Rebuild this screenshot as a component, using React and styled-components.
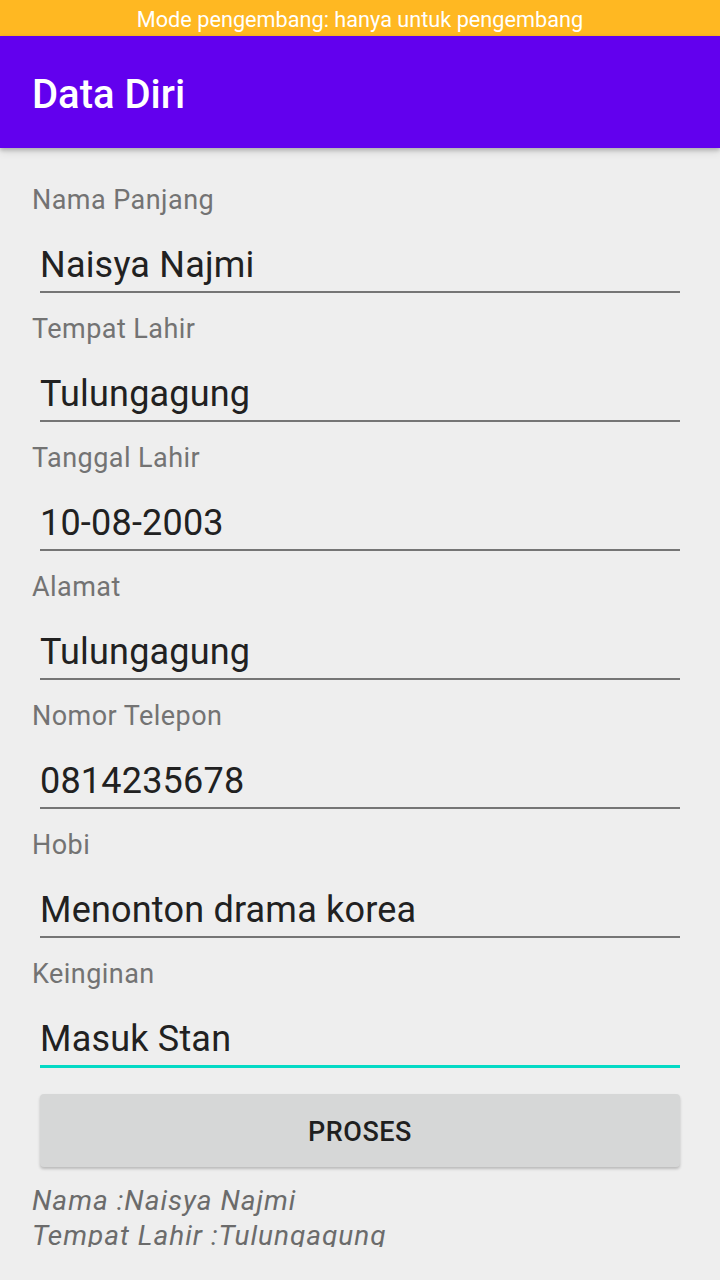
import React from 'react'
import styled, { createGlobalStyle } from 'styled-components'

const GlobalStyle = createGlobalStyle`
  html, body {
    margin: 0;
    padding: 0;
    background: #eeeeee;
  }
  * {
    box-sizing: border-box;
  }
`

const Screen = styled.div`
  width: 720px;
  height: 1280px;
  overflow: hidden;
  background: #eeeeee;
  font-family: Roboto, "Noto Sans", sans-serif;
  display: flex;
  flex-direction: column;
`

const DevBanner = styled.div`
  height: 36px;
  background: #ffb822;
  color: #ffffff;
  font-size: 21.7px;
  line-height: 39px;
  text-align: center;
`

const AppBar = styled.header`
  position: relative;
  z-index: 1;
  height: 112px;
  background: #6200ee;
  display: flex;
  align-items: center;
  padding: 5px 32px 0;
  box-shadow: 0 2px 4px rgba(0, 0, 0, 0.22), 0 4px 8px rgba(0, 0, 0, 0.1);
`

const Title = styled.h1`
  margin: 0;
  color: #ffffff;
  font-size: 40px;
  font-weight: 500;
  line-height: 40px;
`

const Form = styled.main`
  display: flex;
  flex-direction: column;
  padding: 36px 32px 0;
`

const Field = styled.div`
  display: flex;
  flex-direction: column;
  margin-bottom: 20px;
`

const Label = styled.label`
  font-size: 27px;
  letter-spacing: 0.45px;
  line-height: 32px;
  color: #737373;
`

const Input = styled.div`
  margin: 0 8px;
  padding: 27px 0 4px;
  font-size: 36px;
  letter-spacing: 0.2px;
  line-height: 44px;
  color: #212121;
  border-bottom: ${p => (p.$focused ? '3px solid #03dac5' : '2px solid #757575')};
`

const Button = styled.button`
  margin: 6px 8px 0;
  height: 73px;
  padding: 3px 0 0;
  border: none;
  border-radius: 4px;
  background: #d6d7d7;
  color: #1f1f1f;
  font-family: Roboto, "Noto Sans", sans-serif;
  font-size: 27px;
  font-weight: 500;
  letter-spacing: 0.5px;
  box-shadow: 0 2px 3px rgba(0, 0, 0, 0.22);
`

const Result = styled.div`
  margin-top: 16px;
  height: 64px;
  overflow: hidden;
  font-size: 28px;
  font-style: italic;
  letter-spacing: 1px;
  line-height: 35px;
  color: #6b6b6b;
`

const fields = [
  { label: 'Nama Panjang', value: 'Naisya Najmi' },
  { label: 'Tempat Lahir', value: 'Tulungagung' },
  { label: 'Tanggal Lahir', value: '10-08-2003' },
  { label: 'Alamat', value: 'Tulungagung' },
  { label: 'Nomor Telepon', value: '0814235678' },
  { label: 'Hobi', value: 'Menonton drama korea' },
  { label: 'Keinginan', value: 'Masuk Stan', focused: true },
]

export default function App() {
  return (
    <>
      <GlobalStyle />
      <Screen>
        <DevBanner>Mode pengembang: hanya untuk pengembang</DevBanner>
        <AppBar>
          <Title>Data Diri</Title>
        </AppBar>
        <Form>
          {fields.map((f, i) => (
            <Field key={`field-${i}`}>
              <Label>{f.label}</Label>
              <Input $focused={f.focused}>{f.value}</Input>
            </Field>
          ))}
          <Button>PROSES</Button>
          <Result>
            Nama :Naisya Najmi
            <br />
            Tempat Lahir :Tulungagung
          </Result>
        </Form>
      </Screen>
    </>
  )
}
